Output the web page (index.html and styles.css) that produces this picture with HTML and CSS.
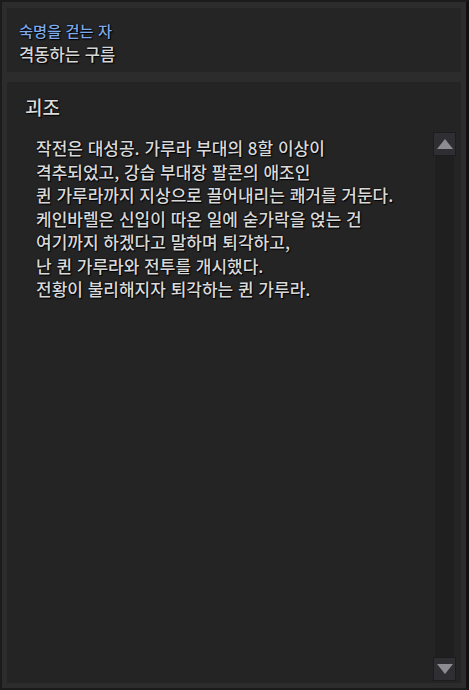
FILE: index.html
```html
<!DOCTYPE html>
<html lang="ko">
<head>
<meta charset="utf-8">
<link rel="stylesheet" href="styles.css">
</head>
<body>
<div class="frame">
  <div class="header">
    <div class="title">숙명을 걷는 자</div>
    <div class="subtitle">격동하는 구름</div>
  </div>
  <div class="panel">
    <div class="heading">괴조</div>
    <div class="content">
      <div class="text">
        <p>작전은 대성공. 가루라 부대의 8할 이상이</p>
        <p>격추되었고, 강습 부대장 팔콘의 애조인</p>
        <p>퀸 가루라까지 지상으로 끌어내리는 쾌거를 거둔다.</p>
        <p>케인바렐은 신입이 따온 일에 숟가락을 얹는 건</p>
        <p>여기까지 하겠다고 말하며 퇴각하고,</p>
        <p>난 퀸 가루라와 전투를 개시했다.</p>
        <p>전황이 불리해지자 퇴각하는 퀸 가루라.</p>
      </div>
      <div class="scrollbar">
        <div class="sbtn">
          <svg width="16" height="10" viewBox="0 0 16 10"><polygon points="8,0 16,10 0,10" fill="#8c8c92"/></svg>
        </div>
        <div class="track"></div>
        <div class="sbtn">
          <svg width="16" height="10" viewBox="0 0 16 10"><polygon points="0,0 16,0 8,10" fill="#8c8c92"/></svg>
        </div>
      </div>
    </div>
  </div>
</div>
</body>
</html>
```
FILE: styles.css
```css
html, body {
  margin: 0;
  padding: 0;
  background: #111;
}
body {
  font-family: "Noto Sans CJK KR", "Noto Sans", sans-serif;
  width: 469px;
  height: 690px;
}
.frame {
  box-sizing: border-box;
  width: 469px;
  height: 690px;
  background: #2c2c2c;
  border: 2px solid #1b1b1b;
  border-right: 3px solid #101010;
  padding: 6px 5px 5px 5px;
  display: flex;
  flex-direction: column;
  gap: 10px;
}
.header {
  background: #252525;
  height: 64px;
  box-sizing: border-box;
  padding: 10px 12px 0 12px;
  text-shadow: 0 0 2px #000, 1px 1px 1px #000;
  font-weight: 500;
}
.title {
  color: #7ea9ea;
  font-size: 15.3px;
  line-height: 24px;
}
.subtitle {
  color: #d6d6d6;
  font-size: 16.6px;
  line-height: 24px;
}
.panel {
  flex: 1;
  background: #242424;
  display: flex;
  flex-direction: column;
  padding: 12px 4px 2px 18px;
  text-shadow: 0 0 2px #000, 1px 1px 1px #000;
  font-weight: 500;
}
.heading {
  color: #dcdcdc;
  font-size: 19px;
  line-height: 26px;
}
.content {
  flex: 1;
  display: flex;
  margin-top: 12px;
}
.text {
  flex: 1;
  padding-left: 11px;
  color: #d9d9d9;
  font-size: 17px;
  line-height: 23.5px;
  padding-top: 4px;
}
.text p {
  margin: 0;
  white-space: nowrap;
}
.scrollbar {
  width: 23px;
  display: flex;
  flex-direction: column;
  margin-right: 1px;
}
.sbtn {
  height: 24px;
  box-sizing: border-box;
  background: #2e2e33;
  border: 1px solid #1c1c1e;
  display: flex;
  align-items: center;
  justify-content: center;
}
.track {
  flex: 1;
  margin: 0 2px;
  background: #1f1f1f;
}
```
